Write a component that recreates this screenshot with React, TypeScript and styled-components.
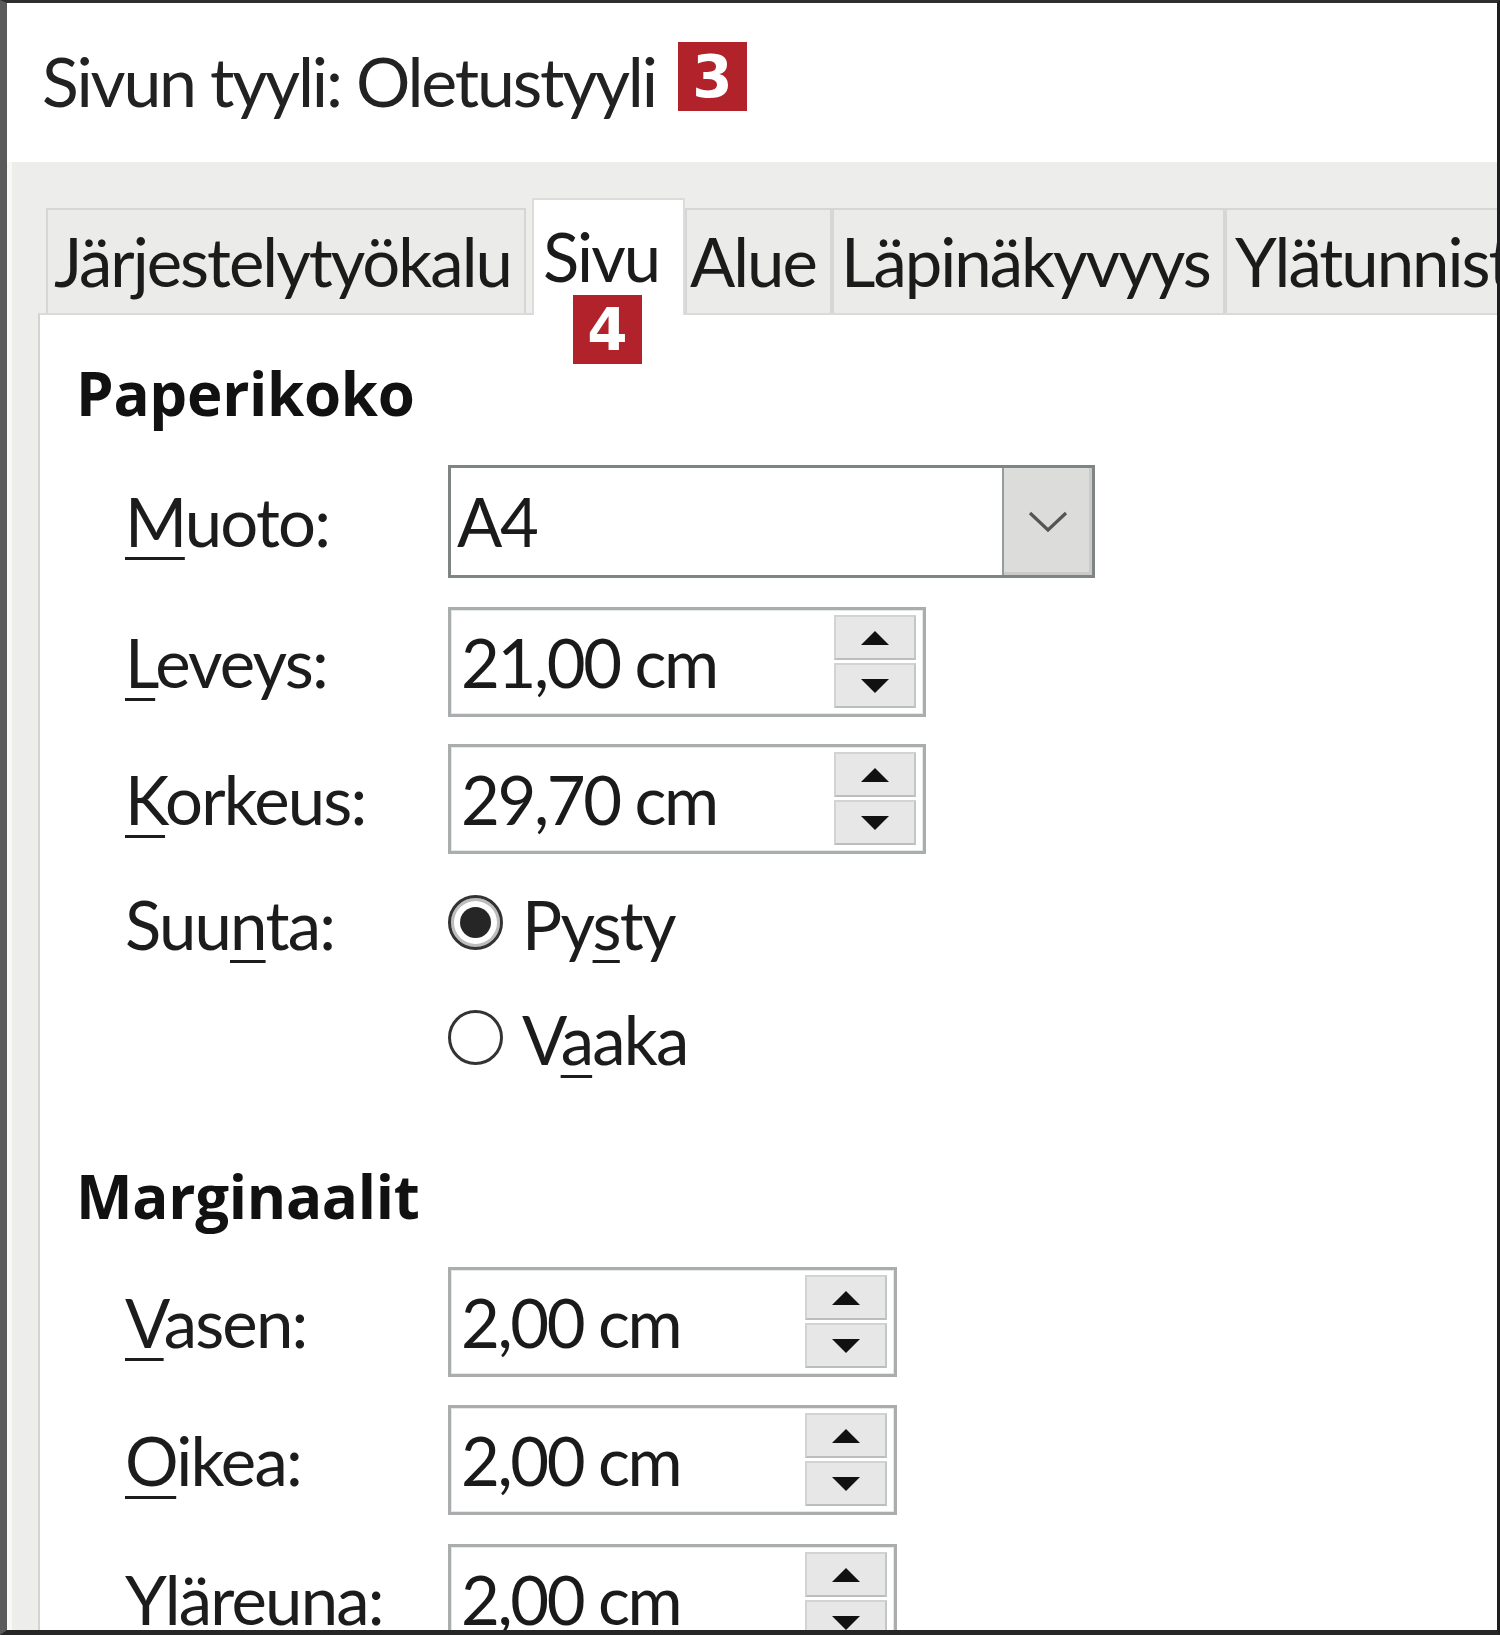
import React from 'react';
import styled, { createGlobalStyle } from 'styled-components';

const FONT = 'Lato, "Open Sans", "Noto Sans", sans-serif';
const BOLD_FONT = '"Open Sans", "Noto Sans", Lato, sans-serif';

const Global = createGlobalStyle`
  html, body { margin: 0; padding: 0; background: #ffffff; }
  body { font-family: ${FONT}; color: #1c1c1c; }
  * { box-sizing: border-box; }
`;

const Frame = styled.div`
  width: 1500px;
  height: 1635px;
  border-top: 3px solid #2e2e2e;
  border-left: 7px solid #5a5a5a;
  border-right: 3px solid #1e1e1e;
  border-bottom: 5px solid #262626;
  overflow: hidden;
  display: flex;
  flex-direction: column;
  background: #ffffff;
  position: relative;
`;

const Header = styled.header`
  height: 159px;
  flex: none;
  padding: 44px 0 0 35px;
  display: flex;
  align-items: flex-start;
  gap: 22px;
`;

const Title = styled.h1`
  margin: 0;
  font-family: ${FONT};
  font-weight: 400;
  font-size: 68px;
  line-height: 68px;
  letter-spacing: -2.2px;
  color: #222222;
  white-space: nowrap;
`;

const Badge = styled.span<{ $top?: number }>`
  flex: none;
  width: 69px;
  height: 69px;
  margin-top: ${(p) => p.$top ?? 0}px;
  background: #b1222a;
  color: #ffffff;
  display: flex;
  align-items: center;
  justify-content: center;
  font-family: "DejaVu Sans", sans-serif;
  font-weight: 700;
  font-size: 58px;
  line-height: 1;
`;

const FloatingBadge = styled(Badge)`
  position: absolute;
  left: 561px;
  top: 133px;
  z-index: 3;
`;

const Body = styled.div`
  flex: 1;
  background: #ededeb;
  border-left: 5px solid #f8f8f7;
  padding-top: 36px;
  display: flex;
  flex-direction: column;
  position: relative;
`;

const TabRow = styled.div`
  display: flex;
  align-items: flex-end;
  height: 115px;
  margin-left: 34px;
  flex: none;
`;

const Tab = styled.div<{ $w: number; $active?: boolean; $pad: number; $gap?: number }>`
  flex: none;
  width: ${(p) => p.$w}px;
  margin-left: ${(p) => p.$gap ?? 0}px;
  height: ${(p) => (p.$active ? 117 : 105)}px;
  margin-bottom: ${(p) => (p.$active ? -2 : 0)}px;
  background: ${(p) => (p.$active ? '#ffffff' : '#ebebe9')};
  border: 2px solid ${(p) => (p.$active ? '#dcdcda' : '#d6d6d4')};
  border-bottom: none;
  padding-left: ${(p) => p.$pad}px;
  padding-top: ${(p) => (p.$active ? 23 : 18)}px;
  font-size: 67px;
  line-height: 67px;
  letter-spacing: -2px;
  color: #1b1b1b;
  white-space: nowrap;
  overflow: hidden;
  position: relative;
  z-index: ${(p) => (p.$active ? 2 : 0)};
`;

const Panel = styled.div`
  flex: 1;
  margin-left: 26px;
  background: #ffffff;
  border-top: 2px solid #dadad8;
  border-left: 2px solid #d4d4d2;
  padding-left: 36px;
  display: flex;
  flex-direction: column;
`;

const SectionTitle = styled.h2<{ $top: number }>`
  margin: ${(p) => p.$top}px 0 0 0;
  font-family: ${BOLD_FONT};
  font-weight: 700;
  font-size: 60px;
  line-height: 65px;
  letter-spacing: -0.3px;
  color: #111111;
`;

const Fields = styled.div`
  padding-left: 49px;
  display: flex;
  flex-direction: column;
`;

const Row = styled.div<{ $h: number; $top: number }>`
  display: flex;
  align-items: center;
  height: ${(p) => p.$h}px;
  margin-top: ${(p) => p.$top}px;
`;

const Label = styled.div`
  flex: none;
  width: 323px;
  font-size: 67px;
  line-height: 67px;
  letter-spacing: -1.8px;
  color: #1c1c1c;
  white-space: nowrap;
`;

const Key = styled.u`
  text-decoration-thickness: 3px;
  text-underline-offset: 10px;
`;

const Combo = styled.div`
  flex: none;
  width: 647px;
  height: 113px;
  border: 3px solid #7f8585;
  display: flex;
  background: #ffffff;
`;

const FieldText = styled.div<{ $pad: number }>`
  flex: 1;
  display: flex;
  align-items: center;
  padding-left: ${(p) => p.$pad}px;
  font-size: 67px;
  line-height: 67px;
  letter-spacing: -2.4px;
  color: #1a1a1a;
  white-space: nowrap;
`;

const ComboButton = styled.div`
  flex: none;
  width: 90px;
  background: #dcdcda;
  border-left: 2px solid #969b9b;
  box-shadow: inset -3px -3px 0 #c9cbcb;
  display: flex;
  align-items: center;
  justify-content: center;
`;

const SpinBox = styled.div<{ $w: number }>`
  flex: none;
  width: ${(p) => p.$w}px;
  height: 110px;
  border: 3px solid #a9adad;
  box-shadow: inset 0 0 0 1px #e6e7e7;
  display: flex;
  background: #ffffff;
`;

const SpinButtons = styled.div`
  flex: none;
  width: 82px;
  margin: 5px 7px 6px 0;
  display: flex;
  flex-direction: column;
  gap: 3px;
`;

const SpinButton = styled.div`
  flex: 1;
  background: #e7e7e7;
  border: 2px solid #d2d4d4;
  border-bottom-color: #bcbebe;
  border-right-color: #c4c6c6;
  display: flex;
  align-items: center;
  justify-content: center;
`;

const RadioGroup = styled.div`
  display: flex;
  flex-direction: column;
  gap: 25px;
`;

const RadioRow = styled.div`
  display: flex;
  align-items: center;
  height: 90px;
  gap: 19px;
`;

const RadioCircle = styled.span<{ $checked?: boolean }>`
  flex: none;
  width: 55px;
  height: 55px;
  border-radius: 50%;
  border: 3px solid #333333;
  background: #ffffff;
  display: flex;
  align-items: center;
  justify-content: center;
  box-shadow: ${(p) => (p.$checked ? 'inset 0 0 0 3px #bdbdbd' : 'none')};
  &::after {
    content: '';
    display: ${(p) => (p.$checked ? 'block' : 'none')};
    width: 31px;
    height: 31px;
    border-radius: 50%;
    background: #262626;
  }
`;

const RadioText = styled.span`
  font-size: 67px;
  line-height: 67px;
  letter-spacing: -1.8px;
  padding-top: 5px;
  color: #1c1c1c;
  white-space: nowrap;
`;

const SuuntaRow = styled.div<{ $top: number }>`
  display: flex;
  align-items: flex-start;
  margin-top: ${(p) => p.$top}px;
`;

const SuuntaLabel = styled(Label)`
  height: 90px;
  display: flex;
  align-items: center;
  padding-top: 5px;
`;

const Arrow = ({ up }: { up?: boolean }) => (
  <svg width="28" height="14" viewBox="0 0 28 14">
    <polygon points={up ? '14,0 28,14 0,14' : '0,0 28,0 14,14'} fill="#111" />
  </svg>
);

const Chevron = () => (
  <svg width="40" height="22" viewBox="0 0 40 22">
    <polyline points="2,2 20,19 38,2" fill="none" stroke="#555" strokeWidth="3.2" />
  </svg>
);

const Spin = ({ value, w }: { value: string; w: number }) => (
  <SpinBox $w={w}>
    <FieldText $pad={10}>{value}</FieldText>
    <SpinButtons>
      <SpinButton>
        <Arrow up />
      </SpinButton>
      <SpinButton>
        <Arrow />
      </SpinButton>
    </SpinButtons>
  </SpinBox>
);

export default function App() {
  return (
    <>
      <Global />
      <Frame>
        <Header>
          <Title>Sivun tyyli: Oletustyyli</Title>
          <Badge $top={-5}>3</Badge>
        </Header>
        <Body>
          <FloatingBadge>4</FloatingBadge>
          <TabRow>
            <Tab $w={480} $pad={6}>Järjestelytyökalu</Tab>
            <Tab $w={153} $pad={9} $gap={6} $active>
              Sivu
            </Tab>
            <Tab $w={147} $pad={3}>Alue</Tab>
            <Tab $w={393} $pad={7}>Läpinäkyvyys</Tab>
            <Tab $w={300} $pad={8}>Ylätunniste</Tab>
          </TabRow>
          <Panel>
            <SectionTitle $top={46}>Paperikoko</SectionTitle>
            <Fields>
              <Row $h={113} $top={39}>
                <Label>
                  <Key>M</Key>uoto:
                </Label>
                <Combo>
                  <FieldText $pad={6}>A4</FieldText>
                  <ComboButton>
                    <Chevron />
                  </ComboButton>
                </Combo>
              </Row>
              <Row $h={110} $top={29}>
                <Label>
                  <Key>L</Key>eveys:
                </Label>
                <Spin value="21,00 cm" w={478} />
              </Row>
              <Row $h={110} $top={27}>
                <Label>
                  <Key>K</Key>orkeus:
                </Label>
                <Spin value="29,70 cm" w={478} />
              </Row>
              <SuuntaRow $top={23}>
                <SuuntaLabel>
                  Suu<Key>n</Key>ta:
                </SuuntaLabel>
                <RadioGroup>
                  <RadioRow>
                    <RadioCircle $checked />
                    <RadioText>
                      Py<Key>s</Key>ty
                    </RadioText>
                  </RadioRow>
                  <RadioRow>
                    <RadioCircle />
                    <RadioText>
                      V<Key>a</Key>aka
                    </RadioText>
                  </RadioRow>
                </RadioGroup>
              </SuuntaRow>
            </Fields>
            <SectionTitle $top={82}>Marginaalit</SectionTitle>
            <Fields>
              <Row $h={110} $top={38}>
                <Label>
                  <Key>V</Key>asen:
                </Label>
                <Spin value="2,00 cm" w={449} />
              </Row>
              <Row $h={110} $top={28}>
                <Label>
                  <Key>O</Key>ikea:
                </Label>
                <Spin value="2,00 cm" w={449} />
              </Row>
              <Row $h={110} $top={29}>
                <Label>
                  <Key>Y</Key>läreuna:
                </Label>
                <Spin value="2,00 cm" w={449} />
              </Row>
            </Fields>
          </Panel>
        </Body>
      </Frame>
    </>
  );
}
